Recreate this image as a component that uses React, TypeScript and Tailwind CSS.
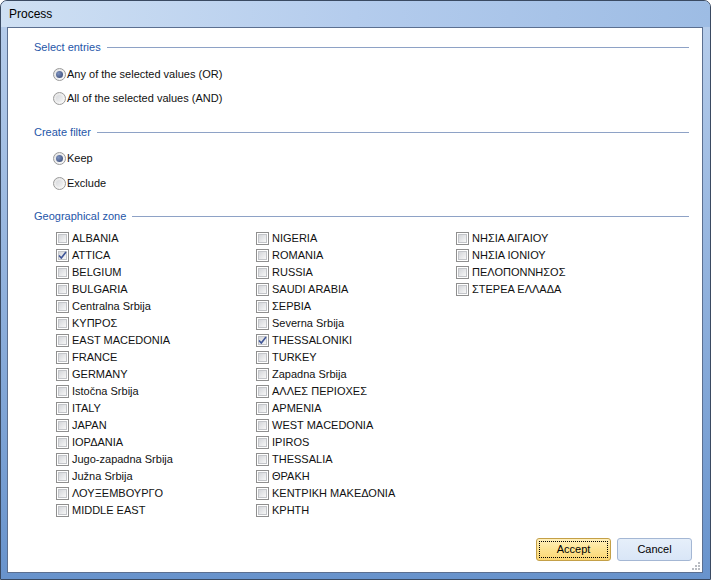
import React from "react";

const col1 = ["ALBANIA","ATTICA","BELGIUM","BULGARIA","Centralna Srbija","ΚΥΠΡΟΣ","EAST MACEDONIA","FRANCE","GERMANY","Istočna Srbija","ITALY","JAPAN","ΙΟΡΔΑΝΙΑ","Jugo-zapadna Srbija","Južna Srbija","ΛΟΥΞΕΜΒΟΥΡΓΟ","MIDDLE EAST"];
const col2 = ["NIGERIA","ROMANIA","RUSSIA","SAUDI ARABIA","ΣΕΡΒΙΑ","Severna Srbija","THESSALONIKI","TURKEY","Zapadna Srbija","ΑΛΛΕΣ ΠΕΡΙΟΧΕΣ","ΑΡΜΕΝΙΑ","WEST MACEDONIA","IPIROS","THESSALIA","ΘΡΑΚΗ","ΚΕΝΤΡΙΚΗ ΜΑΚΕΔΟΝΙΑ","ΚΡΗΤΗ"];
const col3 = ["ΝΗΣΙΑ ΑΙΓΑΙΟΥ","ΝΗΣΙΑ ΙΟΝΙΟΥ","ΠΕΛΟΠΟΝΝΗΣΟΣ","ΣΤΕΡΕΑ ΕΛΛΑΔΑ"];
const checked = new Set(["ATTICA", "THESSALONIKI"]);

function Header({ text }: { text: string }) {
  return (
    <div className="flex items-center h-[14px]">
      <span className="text-[#2556a8] text-[11px] leading-none whitespace-nowrap">{text}</span>
      <div className="flex-1 h-px bg-[#8ea2c6] ml-[6px]" />
    </div>
  );
}

function Radio({ label, on }: { label: string; on?: boolean }) {
  return (
    <div className="flex items-center h-[24px] ml-[19px]">
      <div className="w-[13px] h-[13px] rounded-full border border-[#9a9a9a] bg-gradient-to-br from-[#e4e4e4] to-[#fafafa] flex items-center justify-center">
        {on ? (
          <div className="w-[7px] h-[7px] rounded-full bg-[radial-gradient(circle_at_35%_35%,#7d92bf,#33446f)]" />
        ) : (
          <div className="w-[7px] h-[7px] rounded-full bg-gradient-to-br from-[#d7d9dd] to-[#f3f3f3]" />
        )}
      </div>
      <span className="ml-[1px] text-[11px] leading-none text-[#111]">{label}</span>
    </div>
  );
}

function Check({ label }: { label: string }) {
  const on = checked.has(label);
  return (
    <div className="flex items-center h-[17px]">
      <div className="relative w-[13px] h-[13px] border border-[#8f8f8f] bg-white p-[1px] shrink-0">
        <div className="w-full h-full border border-[#c3c5c9] bg-gradient-to-br from-[#d4d6da] to-[#f7f7f7]" />
        {on && (
          <svg className="absolute left-[1px] top-[1px]" width="9" height="9" viewBox="0 0 9 9">
            <path d="M1 4.5 L3.3 7 L8 1" fill="none" stroke="#3f5597" strokeWidth="1.6" />
          </svg>
        )}
      </div>
      <span className="ml-[3px] text-[11px] leading-none text-[#111] whitespace-nowrap">{label}</span>
    </div>
  );
}

export default function App() {
  return (
    <div
      className="w-[711px] h-[580px] flex flex-col border border-[#3a4a62] rounded-t-[7px] overflow-hidden bg-gradient-to-b from-[#b9cfec] to-[#6893cc]"
      style={{ fontFamily: '"Liberation Sans", Arial, sans-serif' }}
    >
      <div className="h-[26px] flex items-center pl-[8px] bg-gradient-to-r from-[#cfe0f3] via-[#b4cced] to-[#9dbce4]">
        <span className="text-[12px] text-black leading-none">Process</span>
      </div>
      <div className="flex-1 ml-[6px] mr-[7px] mb-[6px] border border-[#5b6f90] bg-white flex flex-col pl-[26px] pr-[13px] pt-[12px] relative">
        <Header text="Select entries" />
        <div className="mt-[8px]">
          <Radio label="Any of the selected values (OR)" on />
          <Radio label="All of the selected values (AND)" />
        </div>
        <div className="mt-[15px]">
          <Header text="Create filter" />
        </div>
        <div className="mt-[7px]">
          <Radio label="Keep" on />
          <div className="mt-[1px]">
            <Radio label="Exclude" />
          </div>
        </div>
        <div className="mt-[14px]">
          <Header text="Geographical zone" />
        </div>
        <div className="mt-[7px] ml-[22px] flex">
          {[col1, col2, col3].map((c, i) => (
            <div key={i} className="w-[200px] flex flex-col">
              {c.map((l) => (
                <Check key={l} label={l} />
              ))}
            </div>
          ))}
        </div>
        <div className="mt-auto mb-[11px] flex justify-end gap-[6px] mr-[-3px]">
          <div className="w-[75px] h-[23px] rounded-[3px] border border-[#c4a047] bg-gradient-to-b from-[#fff0bd] via-[#fde391] to-[#fbd673] p-[2px]">
            <div className="w-full h-full border border-dotted border-black flex items-center justify-center text-[11px] leading-none text-black">
              Accept
            </div>
          </div>
          <div className="w-[75px] h-[23px] rounded-[3px] border border-[#a4b7d4] bg-gradient-to-b from-[#e6effa] to-[#d9e6f7] flex items-center justify-center text-[11px] leading-none text-black">
            Cancel
          </div>
        </div>
        <svg className="absolute right-[1px] bottom-[1px]" width="10" height="10" viewBox="0 0 10 10">
          {[[7, 1], [4, 4], [7, 4], [1, 7], [4, 7], [7, 7]].map(([x, y], i) => (
            <rect key={i} x={x} y={y} width="2" height="2" fill="#b9bcc2" />
          ))}
        </svg>
      </div>
    </div>
  );
}
